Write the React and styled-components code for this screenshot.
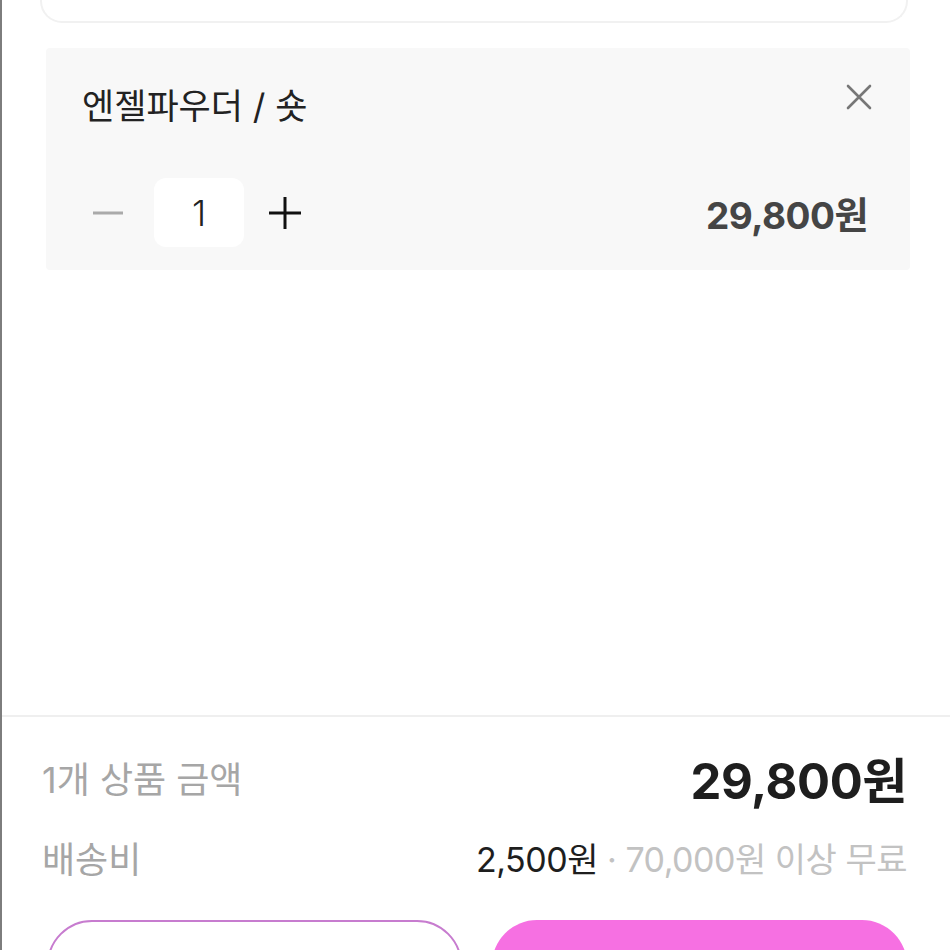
import React from "react";
import styled, { createGlobalStyle } from "styled-components";

const GlobalStyle = createGlobalStyle`
  html, body {
    margin: 0;
    padding: 0;
    background: #fff;
  }
  body {
    font-family: Inter, "Noto Sans CJK KR", "Noto Sans", sans-serif;
  }
`;

const App = () => {
  return (
    <>
      <GlobalStyle />
      <Screen>
        <Main>
          <PrevCard />
          <OptionCard>
            <OptionHead>
              <OptionName>엔젤파우더 / 숏</OptionName>
              <CloseButton aria-label="삭제">
                <svg width="26" height="26" viewBox="0 0 26 26">
                  <path
                    d="M2 2 L24 24 M24 2 L2 24"
                    stroke="#777"
                    strokeWidth="2.6"
                    strokeLinecap="round"
                  />
                </svg>
              </CloseButton>
            </OptionHead>
            <OptionFoot>
              <Stepper>
                <StepButton aria-label="빼기">
                  <svg width="32" height="32" viewBox="0 0 32 32">
                    <path d="M1 16 H31" stroke="#aaa" strokeWidth="3" />
                  </svg>
                </StepButton>
                <QtyBox>1</QtyBox>
                <StepButton aria-label="더하기">
                  <svg width="34" height="34" viewBox="0 0 34 34">
                    <path d="M1 17 H33 M17 1 V33" stroke="#111" strokeWidth="3" />
                  </svg>
                </StepButton>
              </Stepper>
              <ItemPrice>29,800원</ItemPrice>
            </OptionFoot>
          </OptionCard>
        </Main>
        <Footer>
          <SumRow>
            <SumLabel>1개 상품 금액</SumLabel>
            <TotalPrice>29,800원</TotalPrice>
          </SumRow>
          <SumRow>
            <SumLabel>배송비</SumLabel>
            <Shipping>
              2,500원
              <Muted> · 70,000원 이상 무료</Muted>
            </Shipping>
          </SumRow>
          <Actions>
            <ActionButton $variant="outline" />
            <ActionButton $variant="fill" />
          </Actions>
        </Footer>
      </Screen>
    </>
  );
};

export default App;

const Screen = styled.div`
  height: 950px;
  overflow: hidden;
  display: grid;
  grid-template-rows: 715px 1fr;
  border-left: 2px solid #7d7d7d;
  box-sizing: border-box;
`;

const Main = styled.div`
  display: flex;
  flex-direction: column;
`;

const PrevCard = styled.div`
  height: 21px;
  margin: 0 42px 0 38px;
  background: #fff;
  border: 2px solid #f1f1f1;
  border-top: none;
  border-radius: 0 0 22px 22px;
`;

const OptionCard = styled.div`
  margin: 25px 40px 0 44px;
  height: 222px;
  box-sizing: border-box;
  background: #f8f8f8;
  border-radius: 4px;
  padding: 26px 38px 0 36px;
  display: flex;
  flex-direction: column;
`;

const OptionHead = styled.div`
  display: flex;
  justify-content: space-between;
  align-items: flex-start;
`;

const OptionName = styled.div`
  font-size: 35px;
  line-height: 64px;
  color: #222;
`;

const CloseButton = styled.button`
  border: none;
  background: none;
  padding: 0;
  margin-top: 10px;
  display: flex;
`;

const OptionFoot = styled.div`
  margin-top: 40px;
  display: flex;
  justify-content: space-between;
  align-items: center;
  padding-right: 4px;
`;

const Stepper = styled.div`
  display: flex;
  align-items: center;
  margin-left: 10px;
`;

const StepButton = styled.button`
  border: none;
  background: none;
  padding: 0;
  display: flex;
`;

const QtyBox = styled.div`
  width: 90px;
  height: 69px;
  margin: 0 24px 0 30px;
  background: #fff;
  border-radius: 12px;
  display: flex;
  align-items: center;
  justify-content: center;
  font-size: 36px;
  font-weight: 300;
  color: #222;
`;

const ItemPrice = styled.div`
  font-size: 37px;
  font-weight: 700;
  color: #454545;
  letter-spacing: -0.5px;
`;

const Footer = styled.div`
  border-top: 2px solid #efefef;
  padding: 30px 43px 0 40px;
  display: flex;
  flex-direction: column;
`;

const SumRow = styled.div`
  height: 60px;
  display: flex;
  justify-content: space-between;
  align-items: center;
  & + & {
    margin-top: 20px;
  }
`;

const SumLabel = styled.div`
  font-size: 36px;
  color: #a6a6a6;
`;

const TotalPrice = styled.div`
  font-size: 49px;
  font-weight: 700;
  color: #1e1e1e;
  letter-spacing: -0.4px;
`;

const Shipping = styled.div`
  font-size: 34px;
  color: #1e1e1e;
  letter-spacing: -0.5px;
`;

const Muted = styled.span`
  color: #c2c2c2;
`;

const Actions = styled.div`
  margin-top: 33px;
  padding: 0 0 0 5px;
  display: grid;
  grid-template-columns: 1fr 1fr;
  gap: 30px;
`;

const ActionButton = styled.button`
  height: 90px;
  border-radius: 48px;
  box-sizing: border-box;
  border: ${(p) => (p.$variant === "outline" ? "2px solid #c77ccf" : "none")};
  background: ${(p) => (p.$variant === "outline" ? "#fff" : "#f670e2")};
`;
